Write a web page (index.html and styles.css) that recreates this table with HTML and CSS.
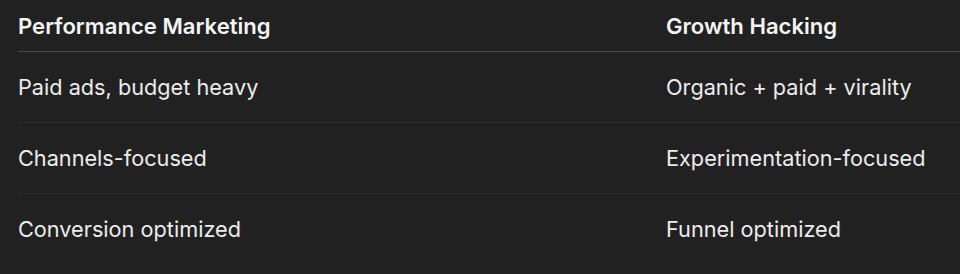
FILE: index.html
```html
<!DOCTYPE html>
<html lang="en">
<head>
  <meta charset="UTF-8">
  <title>Performance Marketing vs Growth Hacking</title>
  <link rel="stylesheet" href="styles.css">
</head>
<body>

<table class="compare-table">
  <thead>
    <tr>
      <th class="col-left">Performance Marketing</th>
      <th>Growth Hacking</th>
    </tr>
  </thead>
  <tbody>
    <tr>
      <td class="col-left">Paid ads, budget heavy</td>
      <td>Organic + paid + virality</td>
    </tr>
    <tr>
      <td class="col-left">Channels-focused</td>
      <td>Experimentation-focused</td>
    </tr>
    <tr>
      <td class="col-left">Conversion optimized</td>
      <td>Funnel optimized</td>
    </tr>
  </tbody>
</table>

</body>
</html>
```

FILE: styles.css
```css
* {
  box-sizing: border-box;
}

body {
  margin: 0;
  padding: 0;
  background: #212121;
  color: #ececec;
  font-family: Inter, "Noto Sans", sans-serif;
}

.compare-table {
  margin-left: 18px;
  width: 942px;
  border-collapse: collapse;
  table-layout: fixed;
}

.compare-table th,
.compare-table td {
  text-align: left;
  padding: 0;
  font-size: 21.7px;
  line-height: 28px;
}

.compare-table .col-left {
  width: 648px;
}

.compare-table th {
  font-size: 22.1px;
  font-weight: 600;
  color: #f4f4f4;
  padding: 12px 0 11px;
  border-bottom: 1px solid #4a4a4a;
}

.compare-table td {
  padding: 21px 0;
  border-bottom: 1px solid #2e2e2e;
}

.compare-table tbody tr:last-child td {
  border-bottom: none;
}
```
